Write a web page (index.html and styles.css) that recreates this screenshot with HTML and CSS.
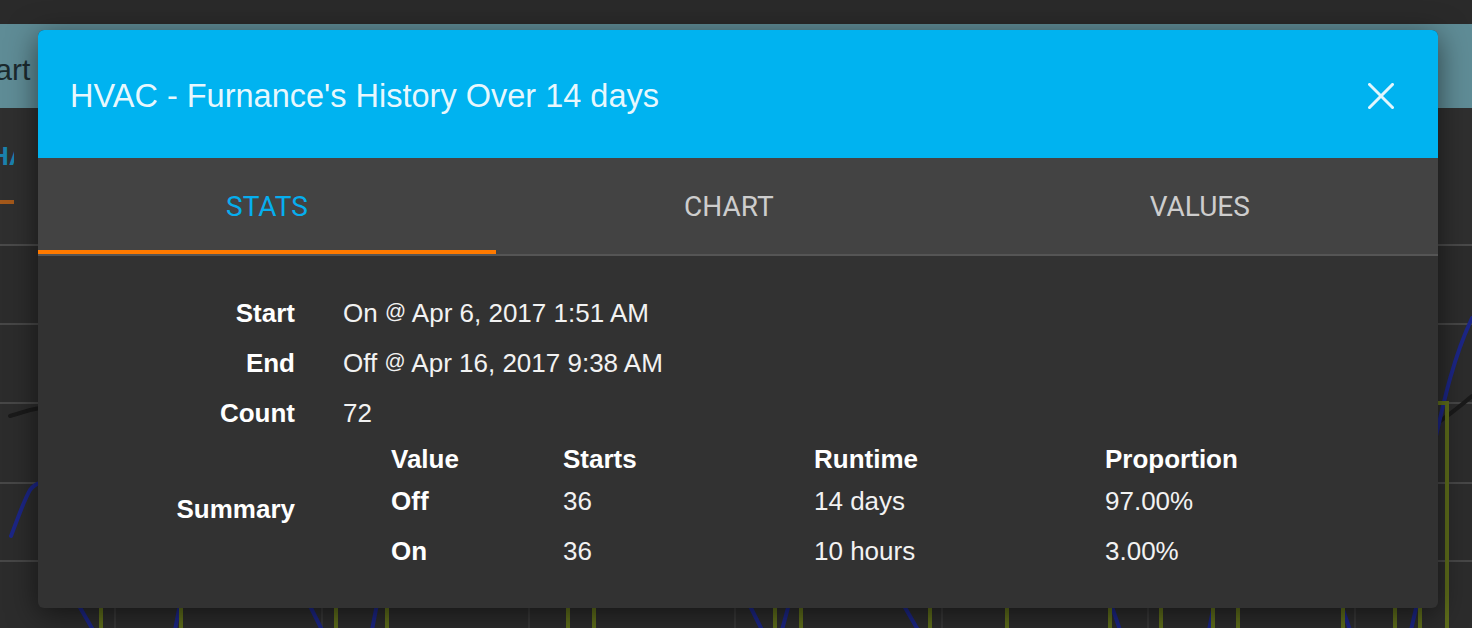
FILE: index.html
```html
<!DOCTYPE html>
<html lang="en">
<head>
<meta charset="utf-8">
<title>HVAC - Furnance's History</title>
<link rel="stylesheet" href="styles.css">
</head>
<body>
<div class="page">
  <div class="topbar"></div>
  <div class="band"><span class="band-title">Chart</span></div>
  <div class="bg-tabs"><div class="bg-tab">HA</div></div>
  <div class="chart">
    <svg class="chart-svg" width="1472" height="382" viewBox="0 246 1472 382" xmlns="http://www.w3.org/2000/svg">
      <g stroke="#474747" stroke-width="2">
        <line x1="0" y1="324" x2="1472" y2="324"/>
        <line x1="0" y1="403" x2="1472" y2="403"/>
        <line x1="0" y1="483" x2="1472" y2="483"/>
        <line x1="0" y1="561" x2="1472" y2="561"/>
      </g>
      <g stroke="#383838" stroke-width="2">
        <line x1="115" y1="246" x2="115" y2="628"/>
        <line x1="322" y1="246" x2="322" y2="628"/>
        <line x1="529" y1="246" x2="529" y2="628"/>
        <line x1="735" y1="246" x2="735" y2="628"/>
        <line x1="942" y1="246" x2="942" y2="628"/>
        <line x1="1148" y1="246" x2="1148" y2="628"/>
        <line x1="1355" y1="246" x2="1355" y2="628"/>
      </g>
      <g fill="none" stroke="#1a1a1a" stroke-width="4" stroke-linecap="round">
        <path d="M10 416 L30 410 L40 408"/>
        <path d="M1430 428 C1445 418 1458 408 1472 396"/>
      </g>
      <g fill="none" stroke="#1c2686" stroke-width="4" stroke-linecap="round">
        <path d="M11 536 C18 518 24 500 30 490 C33 486 36 484 40 483"/>
        <path d="M1434 445 C1442 410 1452 360 1472 318"/>
        <path d="M78 604 L93 630"/>
        <path d="M180 604 L175 630"/>
        <path d="M309 604 L322 630"/>
        <path d="M377 604 L372 630"/>
        <path d="M749 604 L762 630"/>
        <path d="M789 604 L782 630"/>
        <path d="M903 604 L918 630"/>
        <path d="M1111 604 L1120 630"/>
        <path d="M1214 604 L1209 630"/>
        <path d="M1341 604 L1350 630"/>
        <path d="M1417 604 L1411 630"/>
      </g>
      <g fill="none" stroke="#5f6e1b" stroke-width="4">
        <path d="M1430 403 L1447 403 L1447 630"/>
        <line x1="101" y1="600" x2="101" y2="630"/>
        <line x1="181" y1="600" x2="181" y2="630"/>
        <line x1="336" y1="600" x2="336" y2="630"/>
        <line x1="387" y1="600" x2="387" y2="630"/>
        <line x1="568" y1="600" x2="568" y2="630"/>
        <line x1="594" y1="600" x2="594" y2="630"/>
        <line x1="775" y1="600" x2="775" y2="630"/>
        <line x1="801" y1="600" x2="801" y2="630"/>
        <line x1="930" y1="600" x2="930" y2="630"/>
        <line x1="1007" y1="600" x2="1007" y2="630"/>
        <line x1="1110" y1="600" x2="1110" y2="630"/>
        <line x1="1161" y1="600" x2="1161" y2="630"/>
        <line x1="1213" y1="600" x2="1213" y2="630"/>
        <line x1="1238" y1="600" x2="1238" y2="630"/>
        <line x1="1343" y1="600" x2="1343" y2="630"/>
        <line x1="1395" y1="600" x2="1395" y2="630"/>
        <line x1="1420" y1="600" x2="1420" y2="630"/>
      </g>
    </svg>
  </div>

  <div class="dialog">
    <div class="dialog-header">
      <h1 class="dialog-title">HVAC - Furnance's History Over 14 days</h1>
      <svg class="close" width="26" height="26" viewBox="0 0 26 26" xmlns="http://www.w3.org/2000/svg">
        <path d="M1.5 1.5 L24.5 24.5 M24.5 1.5 L1.5 24.5" stroke="#e2f6fd" stroke-width="3" stroke-linecap="square"/>
      </svg>
    </div>
    <div class="tabs">
      <div class="tab active">STATS</div>
      <div class="tab">CHART</div>
      <div class="tab">VALUES</div>
    </div>
    <div class="stats">
      <div class="label">Start</div>
      <div class="value">On <span class="at">@</span> Apr 6, 2017 1:51 AM</div>
      <div class="label">End</div>
      <div class="value">Off <span class="at">@</span> Apr 16, 2017 9:38 AM</div>
      <div class="label">Count</div>
      <div class="value">72</div>
      <div class="label">Summary</div>
      <div class="summary">
        <div class="th">Value</div>
        <div class="th">Starts</div>
        <div class="th">Runtime</div>
        <div class="th">Proportion</div>
        <div class="td key">Off</div>
        <div class="td">36</div>
        <div class="td">14 days</div>
        <div class="td">97.00%</div>
        <div class="td key">On</div>
        <div class="td">36</div>
        <div class="td">10 hours</div>
        <div class="td">3.00%</div>
      </div>
    </div>
  </div>
</div>
</body>
</html>
```

FILE: styles.css
```css
html, body {
  margin: 0;
  padding: 0;
}

body {
  width: 1472px;
  height: 628px;
  overflow: hidden;
  background: #2b2b2b;
  font-family: "Liberation Sans", Arial, sans-serif;
}

.page {
  position: relative;
  width: 1472px;
  height: 628px;
  overflow: hidden;
}

.topbar {
  height: 24px;
  background: #2a2a2a;
}

.band {
  height: 84px;
  box-sizing: border-box;
  padding-top: 8px;
  background: #5f8c96;
  display: flex;
  align-items: center;
  overflow: hidden;
}

.band-title {
  margin-left: -43px;
  font-size: 30px;
  color: #1b2a2e;
  white-space: nowrap;
}

.bg-tabs {
  height: 136px;
  background: #2f2f2f;
  border-bottom: 2px solid #4a4a4a;
}

.bg-tab {
  width: 14px;
  height: 96px;
  box-sizing: border-box;
  padding-top: 33px;
  overflow: hidden;
  white-space: nowrap;
  text-indent: -10px;
  font-size: 26px;
  line-height: 30px;
  font-weight: bold;
  color: #1b82ad;
  border-bottom: 4px solid #a3581a;
}

.chart {
  height: 382px;
  background: #2c2c2c;
}

.chart-svg {
  display: block;
}

/* Dialog */
.dialog {
  position: absolute;
  left: 38px;
  top: 30px;
  width: 1400px;
  border-radius: 6px;
  overflow: hidden;
  background: #323232;
  box-shadow: 0 6px 30px rgba(0, 0, 0, 0.55);
}

.dialog-header {
  height: 128px;
  box-sizing: border-box;
  padding: 4px 44px 0 32px;
  background: #00b3f0;
  display: flex;
  align-items: center;
  justify-content: space-between;
}

.dialog-title {
  margin: 0;
  font-size: 32.5px;
  font-weight: normal;
  color: rgba(255, 255, 255, 0.92);
  white-space: nowrap;
}

.close {
  display: block;
  flex: none;
}

.tabs {
  display: flex;
  height: 98px;
  box-sizing: border-box;
  background: #434343;
  border-bottom: 2px solid #555555;
}

.tab {
  flex: 1 1 auto;
  position: relative;
  display: flex;
  align-items: center;
  justify-content: center;
  font-family: Roboto, "Liberation Sans", Arial, sans-serif;
  font-size: 28px;
  color: #cdcdcd;
}

.tab.active {
  color: #06aeee;
}

.tab.active::after {
  content: "";
  position: absolute;
  left: 0;
  right: 0;
  bottom: 0;
  height: 4px;
  background: #ff7a00;
}

/* Stats content */
.stats {
  display: grid;
  grid-template-columns: 257px 1fr;
  grid-template-rows: 50px 50px 50px auto;
  column-gap: 48px;
  align-items: center;
  padding: 32px 0 28px;
  font-size: 26px;
  color: #ffffff;
}

.label {
  text-align: right;
  font-weight: bold;
}

.value {
  color: #f2f2f2;
  white-space: nowrap;
}

.at {
  font-size: 0.8em;
  vertical-align: 0.18em;
}

.summary {
  margin-left: 48px;
  display: grid;
  grid-template-columns: 172px 251px 291px auto;
  grid-template-rows: 42px 42px 58px;
  align-items: center;
}

.th {
  font-weight: bold;
}

.td {
  color: #f2f2f2;
}

.td.key {
  font-weight: bold;
  color: #ffffff;
}
```
